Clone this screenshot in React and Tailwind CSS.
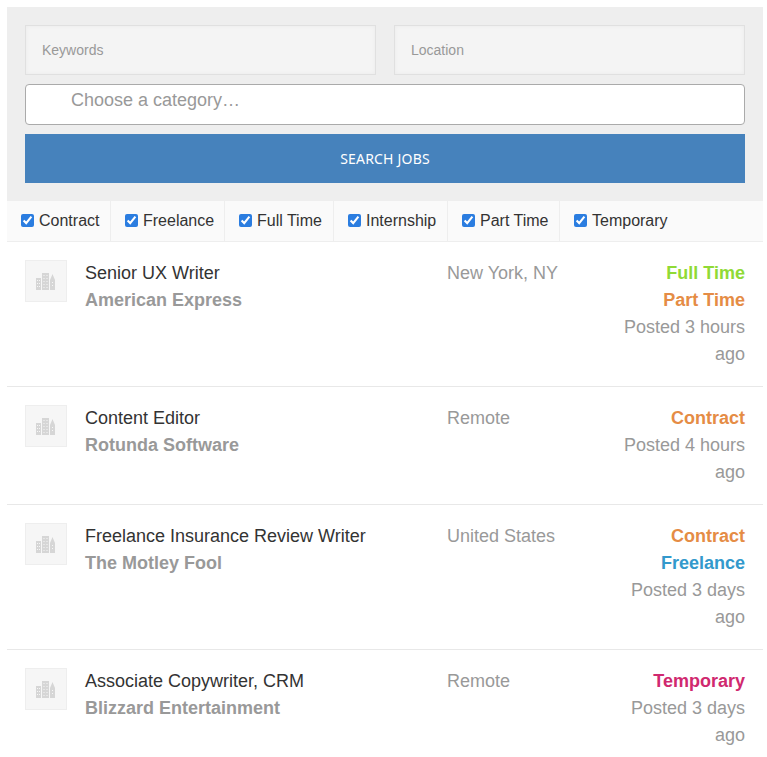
const filters = [
  { label: 'Contract', width: 'w-[104px]' },
  { label: 'Freelance', width: 'w-[114px]' },
  { label: 'Full Time', width: 'w-[109px]' },
  { label: 'Internship', width: 'w-[114px]' },
  { label: 'Part Time', width: 'w-[112px]' },
  { label: 'Temporary', width: 'flex-1' },
]

const jobs = [
  {
    title: 'Senior UX Writer',
    company: 'American Express',
    location: 'New York, NY',
    types: [
      { name: 'Full Time', color: 'text-[#90da36]' },
      { name: 'Part Time', color: 'text-[#e58c45]' },
    ],
    posted: 'Posted 3 hours ago',
  },
  {
    title: 'Content Editor',
    company: 'Rotunda Software',
    location: 'Remote',
    types: [{ name: 'Contract', color: 'text-[#e58c45]' }],
    posted: 'Posted 4 hours ago',
  },
  {
    title: 'Freelance Insurance Review Writer',
    company: 'The Motley Fool',
    location: 'United States',
    types: [
      { name: 'Contract', color: 'text-[#e58c45]' },
      { name: 'Freelance', color: 'text-[#3399cc]' },
    ],
    posted: 'Posted 3 days ago',
  },
  {
    title: 'Associate Copywriter, CRM',
    company: 'Blizzard Entertainment',
    location: 'Remote',
    types: [{ name: 'Temporary', color: 'text-[#d0296f]' }],
    posted: 'Posted 3 days ago',
  },
]

function CompanyLogo() {
  return (
    <div className="flex h-[42px] w-[42px] shrink-0 items-center justify-center border border-[#eeeeee] bg-[#f6f6f6]">
      <svg width="20" height="18" viewBox="0 0 20 18" aria-hidden="true">
        <path fill="#d6d6d6" d="M0 6h5v12H0zM6 1h7v17H6zM14 8l2.500-6L19 8v10h-5z" />
        <g fill="#f6f6f6">
          <path d="M1 8h1v1H1zM3 8h1v1H3zM1 11h1v1H1zM3 11h1v1H3zM1 14h1v1H1zM3 14h1v1H3z" />
          <path d="M7.500 3h1v1h-1zM10.500 3h1v1h-1zM7.500 6h1v1h-1zM10.500 6h1v1h-1zM7.500 9h1v1h-1zM10.500 9h1v1h-1zM7.500 12h1v1h-1zM10.500 12h1v1h-1zM7.500 15h1v1h-1zM10.500 15h1v1h-1z" />
          <path d="M16 10h1v1h-1zM16 13h1v1h-1z" />
        </g>
      </svg>
    </div>
  )
}

function JobRow({ job }) {
  return (
    <li className="flex border-b border-[#e8e8e8] pb-[18px] pt-[18px] pl-[18px] pr-[18px] last:border-b-0">
      <CompanyLogo />
      <div className="ml-[18px] w-[362px] shrink-0 text-[18px] leading-[27px]">
        <div className="text-[#333333]">{job.title}</div>
        <div className="font-bold text-[#999999]">{job.company}</div>
      </div>
      <div className="w-[165px] shrink-0 text-[18px] leading-[27px] text-[#999999]">{job.location}</div>
      <div className="flex-1 text-right text-[18px] leading-[27px]">
        {job.types.map((type) => (
          <div key={type.name} className={`font-bold ${type.color}`}>
            {type.name}
          </div>
        ))}
        <div className="text-[#999999]">{job.posted}</div>
      </div>
    </li>
  )
}

export default function App() {
  return (
    <div className="h-[757px] overflow-hidden bg-white pl-[7px] pr-[4px] pt-[7px] font-['Liberation_Sans',Arial,sans-serif]">
      <form className="bg-[#eeeeee] px-[18px] pb-[18px] pt-[18px]">
        <div className="grid grid-cols-2 gap-[18px]">
          <input
            placeholder="Keywords"
            className="h-[50px] w-full border border-[#e0e0e0] bg-[#f4f4f4] px-4 text-[14px] shadow-[inset_0_0_4px_rgba(0,0,0,0.04)] placeholder:text-[#999999]"
          />
          <input
            placeholder="Location"
            className="h-[50px] w-full border border-[#e0e0e0] bg-[#f4f4f4] px-4 text-[14px] shadow-[inset_0_0_4px_rgba(0,0,0,0.04)] placeholder:text-[#999999]"
          />
        </div>
        <div className="mt-[9px] flex h-[41px] items-start rounded-[4px] border border-[#aaaaaa] bg-white pl-[45px] pt-[4px] text-[18px] leading-[22px] text-[#999999]">
          Choose a category…
        </div>
        <button
          type="button"
          className="mt-[9px] h-[49px] w-full bg-[#4682bc] font-['Noto_Sans',sans-serif] text-[14px] tracking-[0.2px] text-white"
        >
          SEARCH JOBS
        </button>
      </form>

      <ul className="flex h-[41px] border-b border-[#eeeeee] bg-[#fafafa]">
        {filters.map((filter) => (
          <li
            key={filter.label}
            className={`flex items-center border-r border-[#eeeeee] pl-[14px] text-[16px] text-[#333333] last:border-r-0 ${filter.width}`}
          >
            <input type="checkbox" defaultChecked className="m-0 mr-[5px] h-[13px] w-[13px] -translate-y-[1px] accent-[#2b7de0]" readOnly />
            {filter.label}
          </li>
        ))}
      </ul>

      <ul>
        {jobs.map((job) => (
          <JobRow key={job.title} job={job} />
        ))}
      </ul>
    </div>
  )
}
